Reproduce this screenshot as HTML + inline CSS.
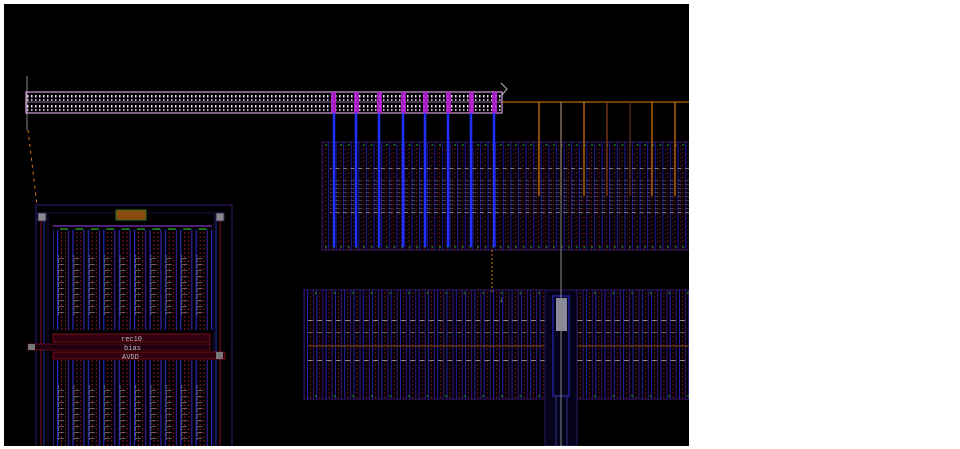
<!DOCTYPE html>
<html><head><meta charset="utf-8"><style>
html,body{margin:0;padding:0;background:#fff;width:960px;height:449px;overflow:hidden}
svg{display:block}
</style></head><body>
<svg width="960" height="449" viewBox="0 0 960 449" xmlns="http://www.w3.org/2000/svg">
<defs>
<clipPath id="cp"><rect x="4" y="4" width="685" height="442"/></clipPath>
<pattern id="bus" x="26" y="92" width="4" height="21" patternUnits="userSpaceOnUse">
<rect x="1" y="3" width="1.5" height="2.5" fill="#f0e0f8"/>
<rect x="1" y="7" width="1.5" height="2" fill="#d0a8d8"/>
<rect x="1" y="13" width="1.5" height="2.5" fill="#f0e0f8"/>
<rect x="1" y="17" width="1.5" height="2" fill="#d0a8d8"/>
</pattern>
<pattern id="up" x="325" y="0" width="7.6" height="4" patternUnits="userSpaceOnUse">
<rect x="0" y="0" width="1" height="2" fill="#701020"/>
<rect x="3" y="0" width="1" height="4" fill="#2418a0"/>
<rect x="5.5" y="1" width="0.8" height="2" fill="#501030"/>
</pattern>
<pattern id="lo" x="306" y="0" width="9.3" height="4" patternUnits="userSpaceOnUse">
<rect x="1" y="0" width="1" height="4" fill="#2a20b0"/>
<rect x="4" y="0" width="1" height="2" fill="#801020"/>
<rect x="7" y="0" width="1" height="4" fill="#3a1880"/>
</pattern>
<pattern id="lf" x="56" y="0" width="15.4" height="4" patternUnits="userSpaceOnUse">
<rect x="1" y="0" width="1.2" height="4" fill="#2a28c0"/>
<rect x="5" y="0" width="1" height="2" fill="#901020"/>
<rect x="9" y="0" width="1" height="2" fill="#801030"/>
<rect x="12" y="0" width="1.2" height="4" fill="#3a20a0"/>
</pattern>
<pattern id="txt" x="0" y="0" width="9.3" height="4" patternUnits="userSpaceOnUse">
<rect x="1" y="0" width="5" height="1" fill="#8a8a8a"/>
</pattern>
<pattern id="txtv" x="0" y="0" width="7.6" height="4" patternUnits="userSpaceOnUse">
<rect x="1" y="0" width="4" height="1" fill="#7a7a7a"/>
</pattern>
<pattern id="txtl" x="56" y="0" width="15.4" height="6" patternUnits="userSpaceOnUse">
<rect x="2" y="0" width="1" height="5" fill="#707070"/>
<rect x="2" y="0" width="6" height="1" fill="#707070"/>
</pattern>
</defs>
<rect x="4" y="4" width="685" height="442" fill="#000"/>
<g clip-path="url(#cp)">
<line x1="27" y1="76" x2="27" y2="130" stroke="#888" stroke-width="1"/>
<rect x="26" y="92" width="476" height="21" fill="url(#bus)" stroke="#d0a0d8" stroke-width="1.2"/>
<line x1="26" y1="102" x2="502" y2="102" stroke="#c090c8" stroke-width="0.8"/>
<path d="M501 83 L507 89 L502 95" fill="none" stroke="#bbb" stroke-width="1"/>
<g fill="#c020e0" opacity="0.85">
<rect x="331" y="92" width="5" height="21"/><rect x="354" y="92" width="5" height="21"/>
<rect x="377" y="92" width="5" height="21"/><rect x="401" y="92" width="5" height="21"/>
<rect x="423" y="92" width="5" height="21"/><rect x="446" y="92" width="5" height="21"/>
<rect x="469" y="92" width="5" height="21"/><rect x="492" y="92" width="5" height="21"/>
</g>
<line x1="502" y1="102" x2="689" y2="102" stroke="#e07810" stroke-width="1"/>
<path d="M28 130 L37 205" stroke="#e07810" stroke-width="1" stroke-dasharray="3,4"/>

<rect x="322" y="142" width="370" height="108" fill="url(#up)" stroke="#3a1870" stroke-width="1"/>
<rect x="330" y="168" width="360" height="4" fill="url(#txtv)"/>
<rect x="330" y="180" width="360" height="30" fill="url(#txtv)" opacity="0.5"/>
<rect x="330" y="212" width="360" height="4" fill="url(#txtv)"/>
<g stroke="#1a6020" stroke-width="2" stroke-dasharray="2,5.6">
<line x1="325" y1="145" x2="690" y2="145"/><line x1="325" y1="247" x2="690" y2="247"/></g>
<g stroke="#2030ff" stroke-width="2.5">
<line x1="334" y1="113" x2="334" y2="247"/><line x1="356" y1="113" x2="356" y2="247"/>
<line x1="379" y1="113" x2="379" y2="247"/><line x1="403" y1="113" x2="403" y2="247"/>
<line x1="425" y1="113" x2="425" y2="247"/><line x1="448" y1="113" x2="448" y2="247"/>
<line x1="471" y1="113" x2="471" y2="247"/><line x1="494" y1="113" x2="494" y2="247"/>
</g>
<g stroke="#e07810" stroke-width="1.2">
<line x1="539" y1="102" x2="539" y2="196"/><line x1="561" y1="102" x2="561" y2="196"/>
<line x1="584" y1="102" x2="584" y2="196"/><line x1="607" y1="102" x2="607" y2="196" stroke="#904010"/>
<line x1="630" y1="102" x2="630" y2="196" stroke="#603010"/><line x1="652" y1="102" x2="652" y2="196"/>
<line x1="675" y1="102" x2="675" y2="196"/>
</g>
<path d="M492 250 L492 292" stroke="#e07810" stroke-width="1" stroke-dasharray="2,2"/>
<text x="499" y="302" font-family="Liberation Sans,sans-serif" font-size="9" fill="#aaa">↓</text>

<rect x="304" y="290" width="388" height="109" fill="url(#lo)" stroke="#3a1870" stroke-width="1"/>
<rect x="308" y="320" width="245" height="4" fill="url(#txt)"/>
<rect x="308" y="330" width="245" height="3" fill="url(#txt)" opacity="0.6"/>
<rect x="308" y="345" width="245" height="2" fill="#6a3a10" opacity="0.7"/>
<rect x="308" y="360" width="245" height="4" fill="url(#txt)"/>
<rect x="575" y="320" width="115" height="4" fill="url(#txt)"/>
<rect x="575" y="330" width="115" height="3" fill="url(#txt)" opacity="0.6"/>
<rect x="575" y="345" width="115" height="2" fill="#6a3a10" opacity="0.7"/>
<rect x="575" y="360" width="115" height="4" fill="url(#txt)"/>
<g stroke="#1a6020" stroke-width="2" stroke-dasharray="2,16.6">
<line x1="315" y1="293" x2="690" y2="293"/><line x1="315" y1="396" x2="690" y2="396"/></g>
<rect x="545" y="290" width="32" height="156" fill="#05031a" stroke="#2a1460"/>
<rect x="553" y="296" width="16" height="100" fill="none" stroke="#2020a0" stroke-width="1.5"/>
<rect x="556" y="298" width="11" height="33" fill="#8a8a9a"/>
<rect x="556" y="396" width="11" height="50" fill="none" stroke="#303080"/>
<line x1="561" y1="102" x2="561" y2="446" stroke="#8a8a8a" stroke-width="1"/>

<rect x="36" y="205" width="196" height="245" fill="none" stroke="#3a1870" stroke-width="1"/>
<rect x="48" y="213" width="166" height="240" fill="none" stroke="#200a40"/>
<rect x="53" y="230" width="160" height="100" fill="url(#lf)"/>
<rect x="53" y="360" width="160" height="90" fill="url(#lf)"/>
<rect x="58" y="255" width="152" height="60" fill="url(#txtl)" opacity="0.8"/>
<rect x="58" y="385" width="152" height="55" fill="url(#txtl)" opacity="0.8"/>
<line x1="53" y1="226" x2="212" y2="226" stroke="#6a2aa0" stroke-width="1.5"/>
<g stroke="#1a7020" stroke-width="2" stroke-dasharray="8,7.4"><line x1="60" y1="229" x2="212" y2="229"/></g>
<rect x="116" y="210" width="30" height="10" fill="#8a4a10" stroke="#2a7020"/>
<rect x="38" y="213" width="8" height="8" fill="#8a8a8a" stroke="#303060"/>
<rect x="216" y="213" width="8" height="8" fill="#8a8a8a" stroke="#303060"/>
<line x1="41" y1="221" x2="41" y2="446" stroke="#801020"/>
<line x1="220" y1="221" x2="220" y2="446" stroke="#801020"/>
<line x1="44" y1="221" x2="44" y2="446" stroke="#2030a0"/>
<line x1="216" y1="221" x2="216" y2="446" stroke="#2030a0"/>
<rect x="53" y="334" width="157" height="8" fill="#300010" stroke="#901020" stroke-width="0.8"/>
<rect x="28" y="344" width="182" height="6" fill="#200010" stroke="#701020" stroke-width="0.8"/>
<rect x="53" y="352" width="172" height="7" fill="#300010" stroke="#901020" stroke-width="0.8"/>
<rect x="28" y="344" width="7" height="6" fill="#777"/>
<rect x="216" y="352" width="7" height="7" fill="#777"/>
<g font-family="Liberation Mono,monospace" font-size="7" fill="#bbb">
<text x="121" y="341">rec10</text><text x="124" y="350">bias</text><text x="122" y="359">AVDD</text></g>
</g>
</svg>
</body></html>
